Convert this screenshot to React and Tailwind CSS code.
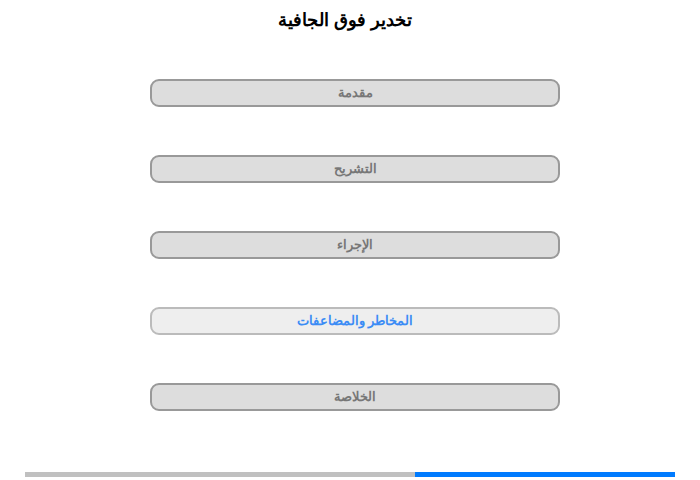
import React from 'react';

const sections = [
  { id: 'intro', label: 'مقدمة' },
  { id: 'anatomy', label: 'التشريح' },
  { id: 'procedure', label: 'الإجراء' },
  { id: 'risks', label: 'المخاطر والمضاعفات', active: true },
  { id: 'summary', label: 'الخلاصة' },
];

export default function App() {
  return (
    <div dir="rtl" className="w-[700px] h-[480px] bg-white relative font-['Liberation_Sans',Arial,sans-serif]">
      <h1 className="text-center font-bold text-[18px] leading-[21px] pt-[10px] pr-[10px] text-black">تخدير فوق الجافية</h1>

      <div className="mt-[48px] flex flex-col gap-[48px] mr-[140px] w-[410px]">
        {sections.map(s => (
          <button
            key={s.id}
            className={
              s.active
                ? 'h-[28px] w-full rounded-[9px] border-2 border-[#bbbbbb] bg-[#eeeeee] text-[#3b8cf5] text-[13px] font-bold'
                : 'h-[28px] w-full rounded-[9px] border-2 border-[#999999] bg-[#dddddd] text-[#777777] text-[13px] font-bold'
            }
          >
            {s.label}
          </button>
        ))}
      </div>

      <div className="absolute left-[25px] top-[472px] w-[650px] h-[5px] bg-[#c0c0c0] flex flex-row-reverse" dir="ltr">
        <div className="h-full w-[260px] bg-[#007bff]" />
      </div>
    </div>
  );
}
